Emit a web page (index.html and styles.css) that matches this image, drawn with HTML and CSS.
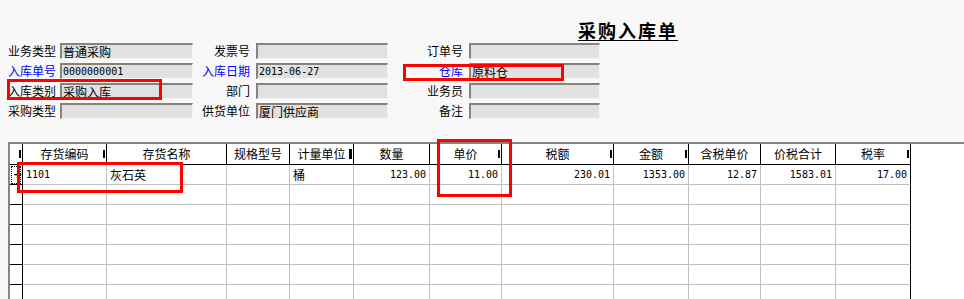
FILE: index.html
```html
<!doctype html>
<html>
  <head>
    <meta charset="utf-8" />
    <title>采购入库单</title>
    <link rel="stylesheet" href="styles.css">
  </head>
  <body>
    <div id="head">
        <div class="title">采购入库单</div>
        <div class="fields">
            <span class="label">业务类型</span><span class="box">普通采购</span>
            <span class="label right">发票号</span><span class="box"></span>
            <span class="label right">订单号</span><span class="box"></span>

            <span class="label blue">入库单号</span><span class="box num">0000000001</span>
            <span class="label right blue">入库日期</span><span class="box num">2013-06-27</span>
            <span class="label right blue">仓库</span><span class="box">原料仓</span>

            <span class="label">入库类别</span><span class="box">采购入库</span>
            <span class="label right">部门</span><span class="box"></span>
            <span class="label right">业务员</span><span class="box"></span>

            <span class="label">采购类型</span><span class="box"></span>
            <span class="label right">供货单位</span><span class="box">厦门供应商</span>
            <span class="label right">备注</span><span class="box"></span>
        </div>
    </div>

    <div id="grid">
        <div class="row header">
            <span class="rh cut"></span>
            <span class="cut">存货编码</span>
            <span>存货名称</span>
            <span>规格型号</span>
            <span class="cut wide">计量单位</span>
            <span>数量</span>
            <span class="cut">单价</span>
            <span class="cut">税额</span>
            <span class="cut">金额</span>
            <span>含税单价</span>
            <span>价税合计</span>
            <span class="cut">税率</span>
        </div>
        <div class="row">
            <span class="rh"><i class="current">+</i></span>
            <span class="num">1101</span>
            <span>灰石英</span>
            <span></span>
            <span>桶</span>
            <span class="num r">123.00</span>
            <span class="num r">11.00</span>
            <span class="num r">230.01</span>
            <span class="num r">1353.00</span>
            <span class="num r">12.87</span>
            <span class="num r">1583.01</span>
            <span class="num r">17.00</span>
        </div>
        <div class="row"><span class="rh"></span><span></span><span></span><span></span><span></span><span></span><span></span><span></span><span></span><span></span><span></span><span></span></div>
        <div class="row"><span class="rh"></span><span></span><span></span><span></span><span></span><span></span><span></span><span></span><span></span><span></span><span></span><span></span></div>
        <div class="row"><span class="rh"></span><span></span><span></span><span></span><span></span><span></span><span></span><span></span><span></span><span></span><span></span><span></span></div>
        <div class="row"><span class="rh"></span><span></span><span></span><span></span><span></span><span></span><span></span><span></span><span></span><span></span><span></span><span></span></div>
        <div class="row"><span class="rh"></span><span></span><span></span><span></span><span></span><span></span><span></span><span></span><span></span><span></span><span></span><span></span></div>
        <div class="row"><span class="rh"></span><span></span><span></span><span></span><span></span><span></span><span></span><span></span><span></span><span></span><span></span><span></span></div>
    </div>

    <!-- red marks drawn over the screenshot -->
    <div class="mark" id="mark-type"></div>
    <div class="mark" id="mark-store"></div>
    <div class="mark" id="mark-goods"></div>
    <div class="mark" id="mark-price"></div>
  </body>
</html>
```

FILE: styles.css
```css
body {
    margin: 0;
    width: 964px;
    height: 299px;
    overflow: hidden;
    position: relative;
    background: #f8f8f8;
    color: #000;
    font: 12px/16px "Noto Sans CJK SC", sans-serif;
}
#head {
    height: 142px;
}
.title {
    padding: 20px 0 0 578px;
    height: 23px;
    font-size: 18px;
    line-height: 20px;
    font-weight: bold;
    letter-spacing: 2px;
    text-decoration: underline;
    text-underline-offset: 2px;
}
.fields {
    display: grid;
    grid-template-columns: 52px 133px 63px 132px 81px 131px;
    grid-auto-rows: 16px;
    row-gap: 4px;
    padding-left: 8px;
}
.label {
    white-space: nowrap;
}
.label.right {
    text-align: right;
    padding-right: 6px;
}
.blue {
    color: #0000ff;
}
.box {
    box-sizing: border-box;
    background: #e1e1e1;
    border-top: 2px solid #85837a;
    border-left: 2px solid #85837a;
    border-bottom: 1px solid #f4f4f0;
    border-right: 1px solid #f4f4f0;
    padding-left: 1px;
    line-height: 13px;
    white-space: nowrap;
    overflow: hidden;
}
.num {
    font-family: "DejaVu Sans Mono", monospace;
    font-size: 10px;
}

#grid {
    margin-left: 8px;
    border-top: 2px solid #858585;
    border-left: 2px solid #858585;
    background: #fff;
    height: 160px;
}
.row {
    display: grid;
    grid-template-columns: 13px 84px 120px 63px 64px 76px 72px 112px 75px 72px 75px 75px;
    height: 20px;
}
.row span {
    box-sizing: border-box;
    border-right: 1px solid #c0c0c0;
    border-bottom: 1px solid #c0c0c0;
    padding: 0 3px;
    line-height: 19px;
    white-space: nowrap;
    overflow: hidden;
}
.row span.num {
    line-height: 20px;
}
.row span.r {
    text-align: right;
}
.row span:last-child,
.row span.rh {
    border-right-color: #000;
}
.row span.rh {
    padding: 0;
    border-bottom-color: #000;
}
.header {
    height: 21px;
}
.header span {
    position: relative;
    text-align: center;
    line-height: 20px;
    border-right-color: #000;
    border-bottom-color: #000;
}
.header .cut::after {
    content: "";
    position: absolute;
    right: 1px;
    top: 6px;
    width: 2px;
    height: 8px;
    background: #000;
}
.header .cut.wide::after {
    width: 3px;
    height: 10px;
    top: 5px;
}
.current {
    display: block;
    box-sizing: border-box;
    margin: 1px 0 0 1px;
    width: 10px;
    height: 18px;
    border: 1px dotted #000;
    padding-left: 1px;
    font: bold 11px/16px "DejaVu Sans", sans-serif;
    font-style: normal;
    text-align: left;
}

.mark {
    position: absolute;
    border: 3px solid #ff0000;
    box-sizing: border-box;
}
#mark-type {
    left: 7px;
    top: 79px;
    width: 155px;
    height: 21px;
}
#mark-store {
    left: 403px;
    top: 64px;
    width: 161px;
    height: 17px;
}
#mark-goods {
    left: 17px;
    top: 162px;
    width: 166px;
    height: 31px;
}
#mark-price {
    left: 437px;
    top: 139px;
    width: 75px;
    height: 58px;
}
```
